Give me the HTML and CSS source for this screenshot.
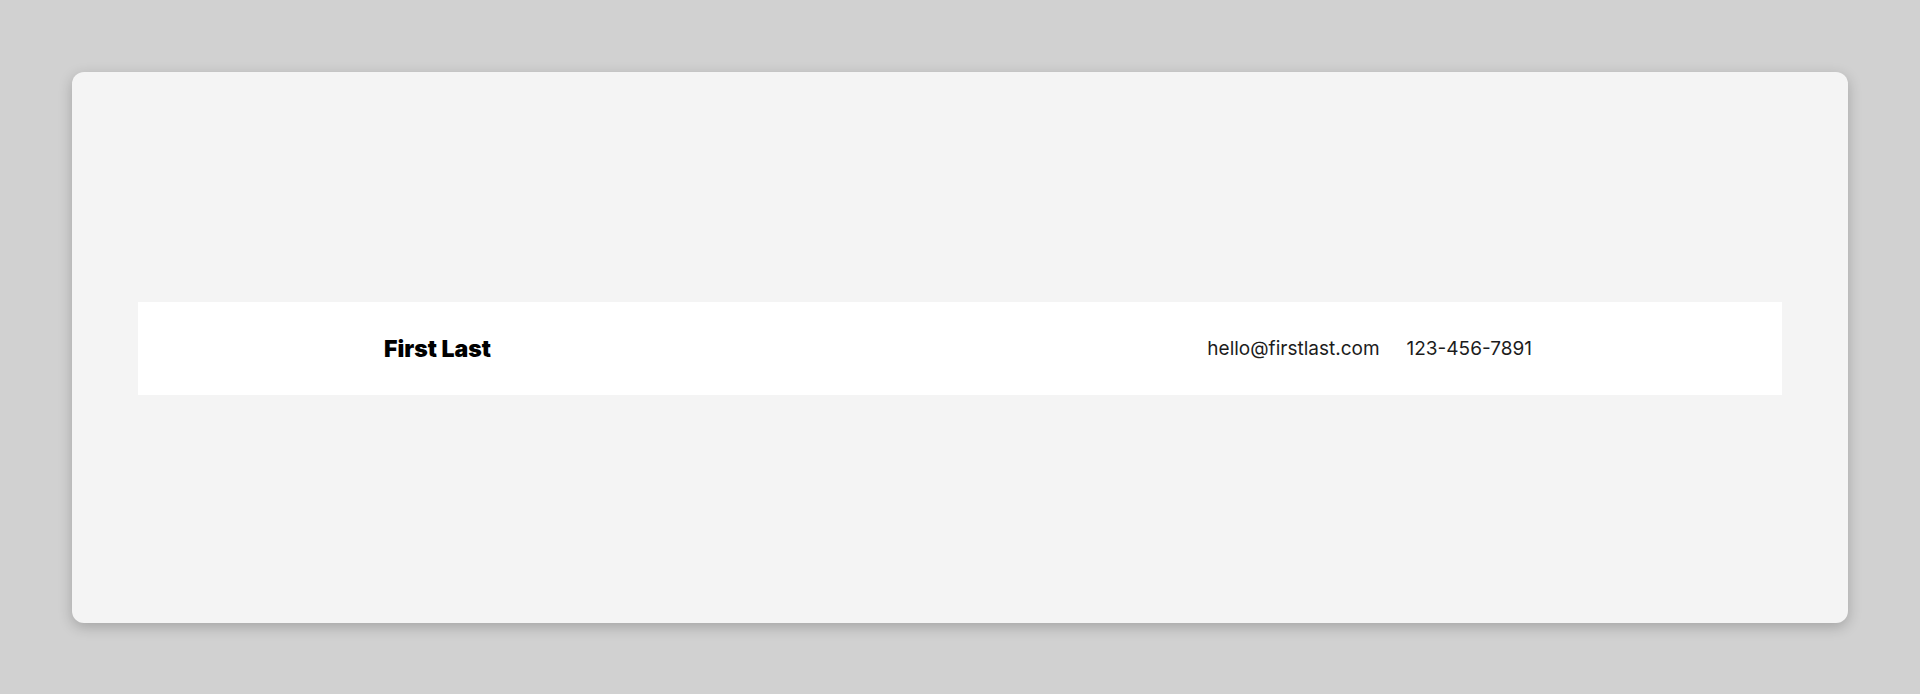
FILE: index.html
```html
<!DOCTYPE html>
<html>
  <head>
    <title>First Last</title>
    <meta charset="UTF-8" />
    <link rel="stylesheet" href="styles.css">
  </head>
  <body>
    <div class="frame">
      <header class="bar">
        <div class="bar-inner">
          <div class="name">First Last</div>
          <div class="contact">
            <span>hello@firstlast.com</span>
            <span>123-456-7891</span>
          </div>
        </div>
      </header>
    </div>
  </body>
</html>
```
FILE: styles.css
```css
* {
  box-sizing: border-box;
}
html {
  background-color: #D1D1D1;
}
body {
  margin: 0;
  padding: 72px;
  font-family: Inter, "Noto Sans", sans-serif;
}
.frame {
  height: 551px;
  display: flex;
  flex-direction: column;
  justify-content: center;
  padding: 2px 66px 0;
  background: #F4F4F4;
  border-radius: 12px;
  box-shadow: 0 4px 14px rgba(0, 0, 0, 0.22);
}
.bar {
  height: 93px;
  background: #FFFFFF;
  display: flex;
  align-items: center;
}
.bar-inner {
  width: 100%;
  max-width: 1152px;
  margin-left: auto;
  margin-right: auto;
  padding-right: 4px;
  display: flex;
  align-items: center;
  justify-content: space-between;
}
.name {
  font-size: 23px;
  font-weight: 900;
  color: #000000;
  letter-spacing: 0;
}
.contact {
  display: flex;
  gap: 27px;
  font-size: 19px;
  color: #1C1C1C;
}
```
